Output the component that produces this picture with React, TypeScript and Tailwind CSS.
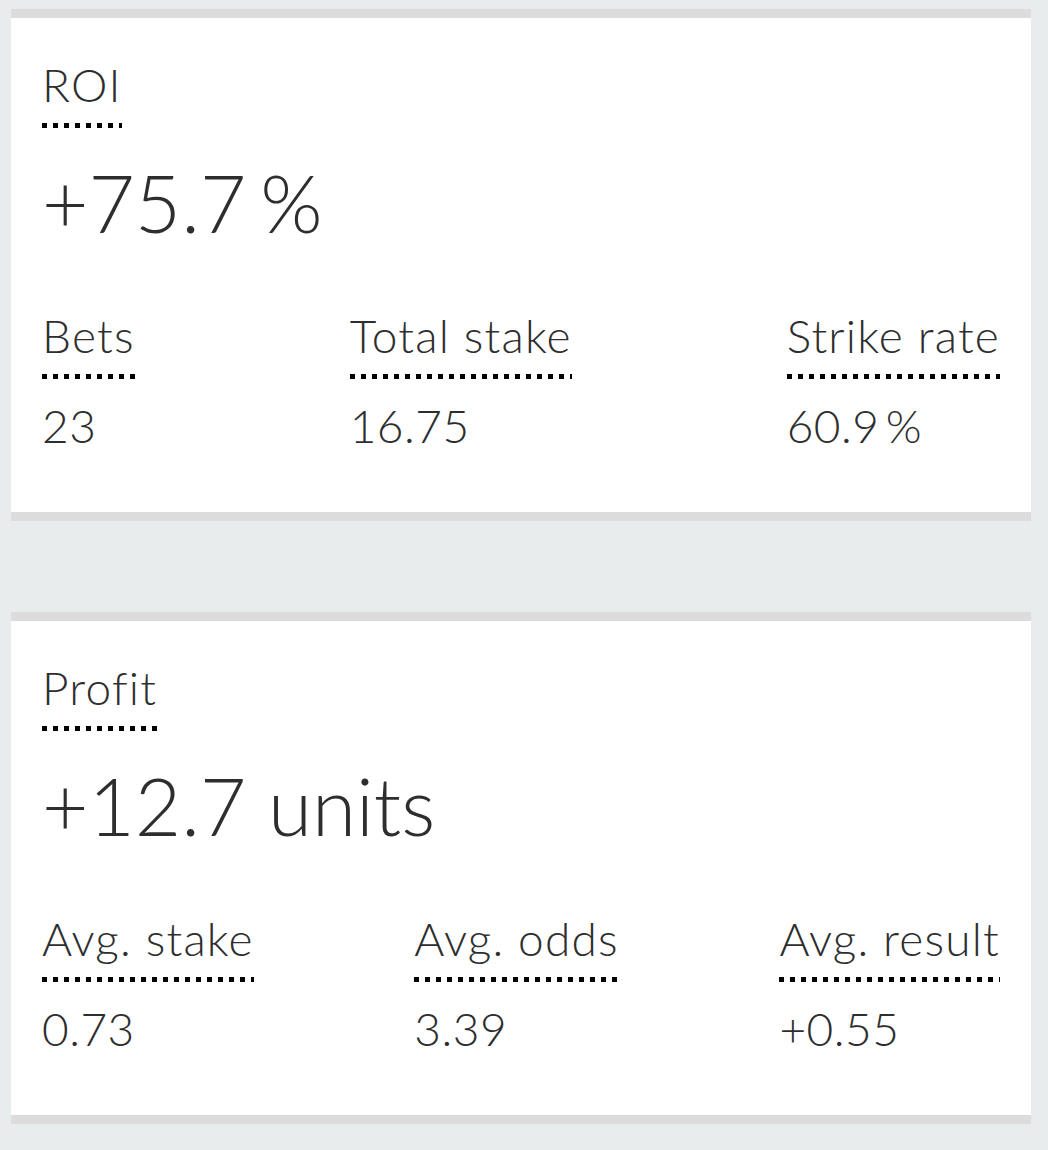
function Stat({ label, value }: { label: string; value: string }) {
  return (
    <div className="flex flex-col items-start">
      <span className="inline-block bg-[linear-gradient(to_right,#000_5px,transparent_5px)] bg-[length:11px_5px] bg-bottom-left bg-repeat-x pb-[20px] leading-none">
        {label}
      </span>
      <span className="mt-[24px] leading-none tracking-[0.5px]">{value}</span>
    </div>
  );
}

function Card({
  title,
  big,
  stats,
}: {
  title: string;
  big: React.ReactNode;
  stats: { label: string; value: string }[];
}) {
  return (
    <section className="w-[1020px] border-y-[9px] border-[#dcdcdc] bg-white px-[31px] pt-[44px] pb-[63px]">
      <div className="flex">
        <span className="inline-block bg-[linear-gradient(to_right,#000_5px,transparent_5px)] bg-[length:11px_5px] bg-bottom-left bg-repeat-x pb-[20px] leading-none">
          {title}
        </span>
      </div>
      <div className="mt-[34px] text-[80px] leading-none tracking-normal">{big}</div>
      <div className="mt-[71px] flex justify-between">
        {stats.map((s) => (
          <Stat key={s.label} label={s.label} value={s.value} />
        ))}
      </div>
    </section>
  );
}

export default function App() {
  return (
    <div className="flex min-h-[1150px] flex-col gap-[91px] bg-[#e9ecec] pt-[9px] pl-[11px] font-['Lato',sans-serif] text-[46px] font-light tracking-[1.2px] text-[#2e2e2e]">
      <Card
        title="ROI"
        big={
          <>
            +75.7<span className="ml-[14px]">%</span>
          </>
        }
        stats={[
          { label: "Bets", value: "23" },
          { label: "Total stake", value: "16.75" },
          { label: "Strike rate", value: "60.9\u2009%" },
        ]}
      />
      <Card
        title="Profit"
        big="+12.7 units"
        stats={[
          { label: "Avg. stake", value: "0.73" },
          { label: "Avg. odds", value: "3.39" },
          { label: "Avg. result", value: "+0.55" },
        ]}
      />
    </div>
  );
}
